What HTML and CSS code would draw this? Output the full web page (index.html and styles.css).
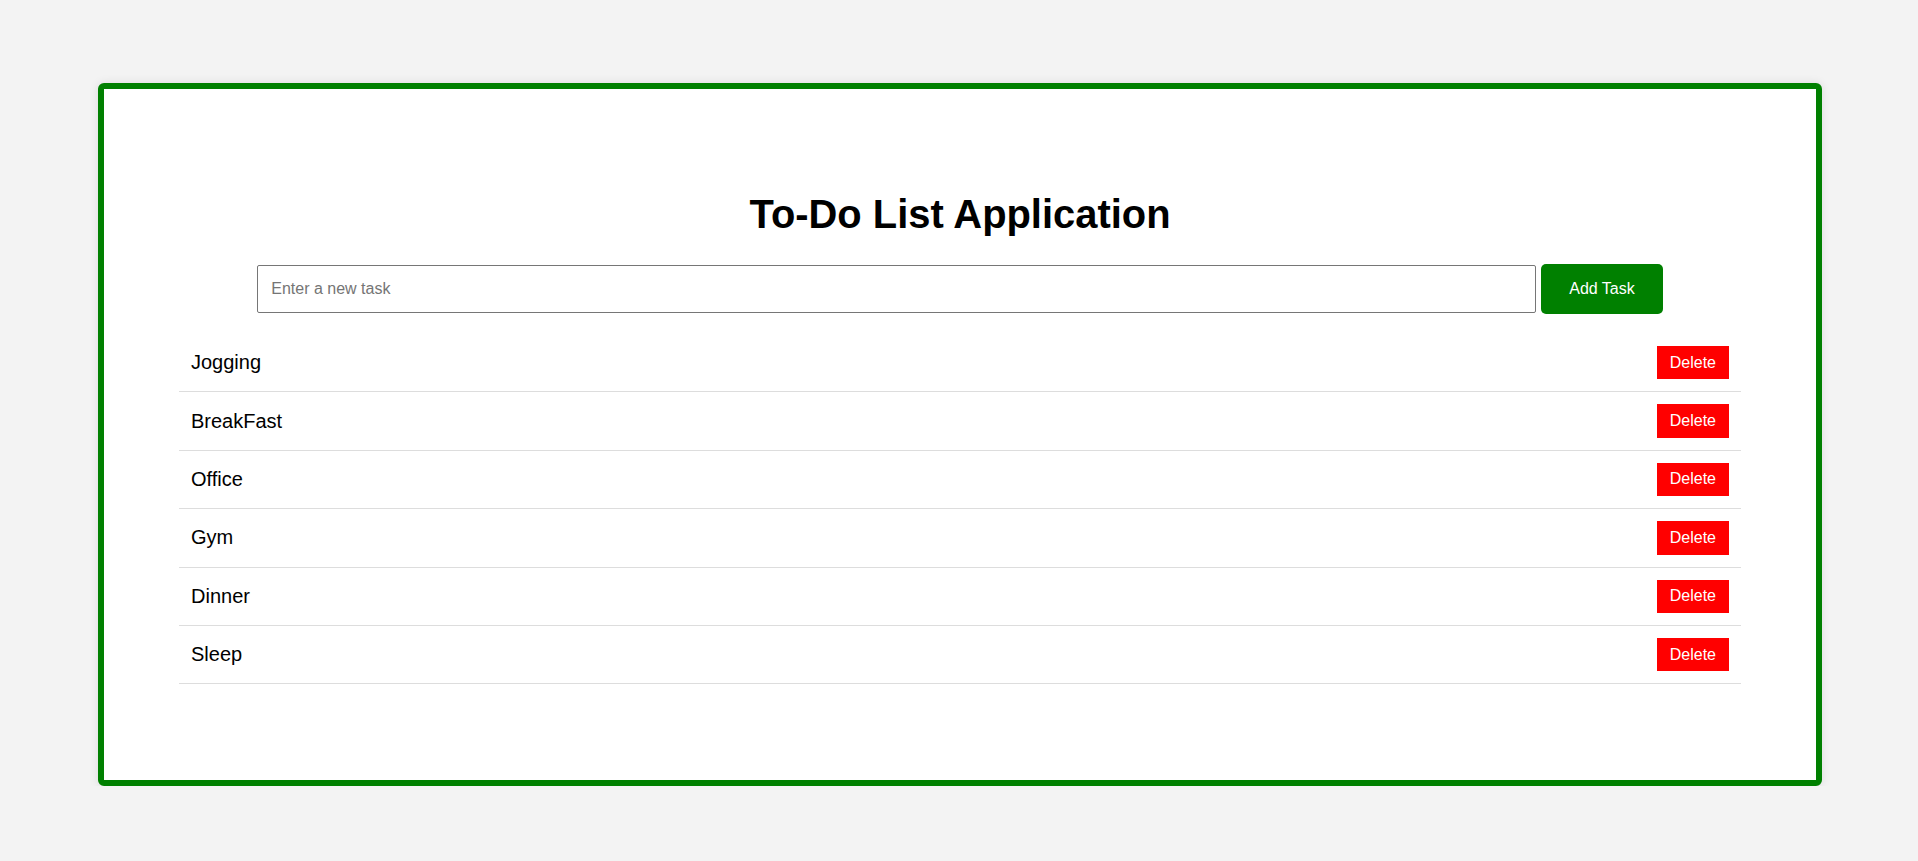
FILE: index.html
```html
<!DOCTYPE html>
<html lang="en">
<head>
<meta charset="utf-8">
<title>To-Do List Application</title>
<link rel="stylesheet" href="styles.css">
</head>
<body>
<div class="container">
  <h1 class="title">To-Do List Application</h1>
  <div class="form-row">
    <input class="task-input" type="text" placeholder="Enter a new task">
    <button class="add-btn" type="button">Add Task</button>
  </div>
  <ul class="task-list">
    <li class="task-item"><span class="task-text">Jogging</span><button class="delete-btn" type="button">Delete</button></li>
    <li class="task-item"><span class="task-text">BreakFast</span><button class="delete-btn" type="button">Delete</button></li>
    <li class="task-item"><span class="task-text">Office</span><button class="delete-btn" type="button">Delete</button></li>
    <li class="task-item"><span class="task-text">Gym</span><button class="delete-btn" type="button">Delete</button></li>
    <li class="task-item"><span class="task-text">Dinner</span><button class="delete-btn" type="button">Delete</button></li>
    <li class="task-item"><span class="task-text">Sleep</span><button class="delete-btn" type="button">Delete</button></li>
  </ul>
</div>
</body>
</html>
```

FILE: styles.css
```css
html, body {
  margin: 0;
  padding: 0;
}

body {
  background: #f3f3f3;
  font-family: "Liberation Sans", Arial, sans-serif;
  color: #000;
  padding-top: 83px;
}

.container {
  margin: 0 96px 0 98px;
  background: #fff;
  border: 6px solid #008000;
  border-radius: 6px;
  box-shadow: 0 0 10px rgba(0, 0, 0, 0.1);
  padding: 75px;
  box-sizing: border-box;
  height: 703px;
}

.title {
  font-size: 39.9px;
  font-weight: bold;
  text-align: center;
  margin: 26.8px 0;
  line-height: 46px;
}

.form-row {
  display: flex;
  justify-content: center;
  align-items: center;
  gap: 5px;
}

.task-input {
  width: 1279px;
  box-sizing: border-box;
  font-family: "Liberation Sans", Arial, sans-serif;
  font-size: 16px;
  padding: 14px 13px;
  border: 1px solid #767676;
  border-radius: 2px;
  color: #000;
  outline: none;
}

.task-input::placeholder {
  color: #757575;
}

.add-btn {
  font-family: "Liberation Sans", Arial, sans-serif;
  font-size: 16px;
  background: #008000;
  color: #fff;
  border: none;
  border-radius: 5px;
  padding: 16px 28px;
  line-height: 18.4px;
}

.task-list {
  list-style: none;
  margin: 20px 0;
  padding: 0;
}

.task-item {
  display: flex;
  justify-content: space-between;
  align-items: center;
  padding: 12px;
  border-bottom: 1px solid #ddd;
}

.task-text {
  font-size: 20px;
}

.delete-btn {
  font-family: "Liberation Sans", Arial, sans-serif;
  font-size: 16px;
  line-height: 18.4px;
  background: #ff0000;
  color: #fff;
  border: none;
  border-radius: 0;
  padding: 7.5px 13px;
}
```
